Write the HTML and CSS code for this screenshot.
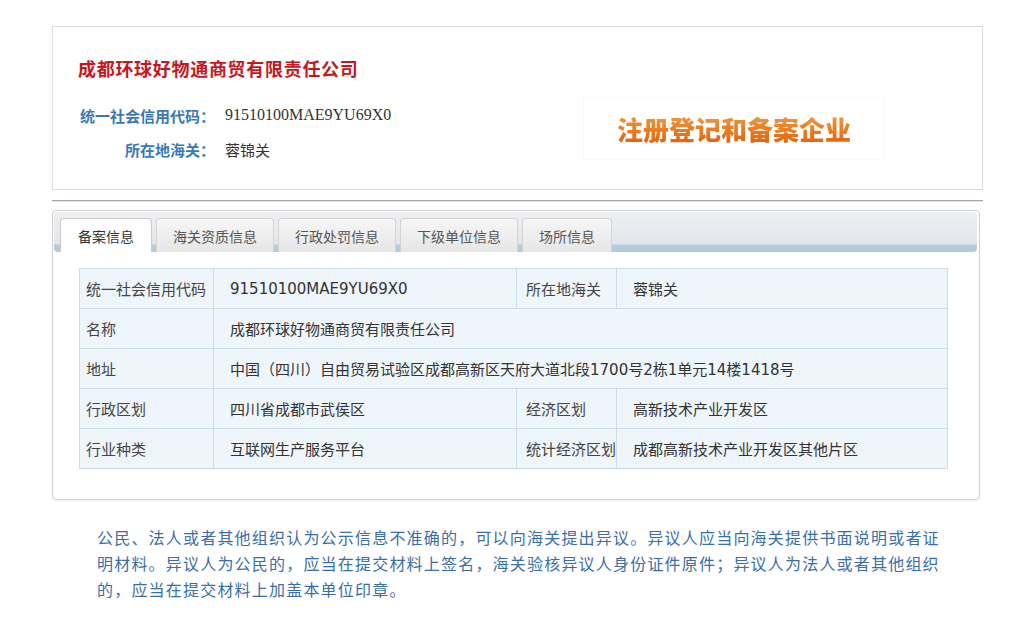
FILE: index.html
```html
<!DOCTYPE html>
<html lang="zh-CN">
<head>
<meta charset="utf-8">
<title>企业信息</title>
<link rel="stylesheet" href="styles.css">
</head>
<body>
<div class="page">
  <div class="card">
    <h1 class="title">成都环球好物通商贸有限责任公司</h1>
    <div class="card-body">
      <div class="info">
        <div class="info-row"><span class="info-label">统一社会信用代码：</span><span class="info-value code-serif">91510100MAE9YU69X0</span></div>
        <div class="info-row"><span class="info-label">所在地海关：</span><span class="info-value">蓉锦关</span></div>
      </div>
      <div class="badge"><span class="badge-text">注册登记和备案企业</span></div>
    </div>
  </div>
  <div class="divider"></div>
  <div class="panel">
    <div class="tabs">
      <div class="tab active">备案信息</div>
      <div class="tab">海关资质信息</div>
      <div class="tab">行政处罚信息</div>
      <div class="tab">下级单位信息</div>
      <div class="tab">场所信息</div>
    </div>
    <table class="grid">
      <colgroup>
        <col class="c1"><col class="c2"><col class="c3"><col class="c4">
      </colgroup>
      <tr><td class="lab">统一社会信用代码</td><td class="val">91510100MAE9YU69X0</td><td class="lab lab2">所在地海关</td><td class="val">蓉锦关</td></tr>
      <tr><td class="lab">名称</td><td class="val" colspan="3">成都环球好物通商贸有限责任公司</td></tr>
      <tr><td class="lab">地址</td><td class="val" colspan="3">中国（四川）自由贸易试验区成都高新区天府大道北段1700号2栋1单元14楼1418号</td></tr>
      <tr><td class="lab">行政区划</td><td class="val">四川省成都市武侯区</td><td class="lab lab2">经济区划</td><td class="val">高新技术产业开发区</td></tr>
      <tr><td class="lab">行业种类</td><td class="val">互联网生产服务平台</td><td class="lab lab2">统计经济区划</td><td class="val">成都高新技术产业开发区其他片区</td></tr>
    </table>
  </div>
  <p class="note">公民、法人或者其他组织认为公示信息不准确的，可以向海关提出异议。异议人应当向海关提供书面说明或者证明材料。异议人为公民的，应当在提交材料上签名，海关验核异议人身份证件原件；异议人为法人或者其他组织的，应当在提交材料上加盖本单位印章。</p>
</div>
</body>
</html>
```

FILE: styles.css
```css
html, body {
  margin: 0;
  padding: 0;
  background: #ffffff;
}
body {
  font-family: "Noto Sans CJK SC", "DejaVu Sans", sans-serif;
  color: #333;
}
.page {
  padding: 26px 0 0 52px;
  width: 931px;
}
.card {
  box-sizing: border-box;
  height: 164px;
  border: 1px solid #dcdcdc;
  padding: 29px 0 0 25px;
}
.title {
  margin: 0;
  font-size: 18px;
  line-height: 24px;
  letter-spacing: 0.7px;
  font-weight: 700;
  color: #c8161d;
}
.card-body {
  display: flex;
  margin-top: 18px;
}
.info {
  width: 505px;
}
.info-row {
  display: flex;
  align-items: center;
  height: 34px;
}
.info-label {
  width: 137px;
  text-align: right;
  font-size: 15px;
  font-weight: 700;
  color: #3b78b5;
}
.info-value {
  margin-left: 10px;
  font-size: 15px;
  color: #333;
}
.code-serif {
  font-family: "Liberation Serif", serif;
  font-size: 16px;
}
.badge {
  box-sizing: border-box;
  margin-top: -1px;
  width: 302px;
  height: 63px;
  border: 1px solid #f9f9f9;
  background: #ffffff;
  display: flex;
  align-items: center;
  justify-content: center;
}
.badge-text {
  font-size: 26px;
  font-weight: 900;
  line-height: 30px;
  color: #ec7d22;
  background: linear-gradient(#f39a3a, #e2620e);
  -webkit-background-clip: text;
  background-clip: text;
  -webkit-text-fill-color: transparent;
}
.divider {
  margin-top: 10px;
  height: 1px;
  background: #aaa3b4;
  border-bottom: 1px solid #e4e1e8;
}
.panel {
  box-sizing: border-box;
  margin-top: 8px;
  width: 928px;
  border: 1px solid #cfcfcf;
  border-radius: 4px;
  padding: 1px 2px 30px 1px;
  box-shadow: 0 1px 1px rgba(0,0,0,0.06);
}
.tabs {
  display: flex;
  align-items: flex-end;
  gap: 4px;
  height: 40px;
  box-sizing: border-box;
  padding-left: 6px;
  border-radius: 4px;
  background: linear-gradient(#eef0f3 0px, #e1e5e9 32px, #b8cddb 33px, #b3c9d8 40px);
}
.tab {
  box-sizing: border-box;
  height: 34px;
  padding: 0 16px;
  display: flex;
  align-items: center;
  font-size: 14px;
  color: #555;
  border: 1px solid #d3d3d3;
  border-bottom: none;
  border-radius: 4px 4px 0 0;
  background: linear-gradient(#f6f6f6, #e6e6e6);
}
.tab.active {
  padding: 0 17px;
  background: #ffffff;
  color: #333;
  border-color: #cccccc;
}
.grid {
  margin: 16px 0 0 25px;
  width: 869px;
  border-collapse: collapse;
  table-layout: fixed;
  font-family: "DejaVu Sans", "Noto Sans CJK SC", sans-serif;
  font-size: 15px;
  color: #333;
}
.c1 { width: 134px; }
.c2 { width: 303px; }
.c3 { width: 100px; }
.c4 { width: auto; }
.grid td {
  height: 40px;
  box-sizing: border-box;
  padding: 0;
  border: 1px solid #cbdde8;
  background: #eef5fb;
  white-space: nowrap;
  overflow: hidden;
}
.grid td.lab {
  padding-left: 6px;
  color: #444;
}
.grid td.lab2 {
  padding-left: 9px;
}
.grid td.val {
  padding-left: 16px;
}
.note {
  margin: 24px 0 0 45px;
  width: 850px;
  font-size: 16px;
  line-height: 26px;
  letter-spacing: 1.2px;
  color: #3a6ea6;
}
```
